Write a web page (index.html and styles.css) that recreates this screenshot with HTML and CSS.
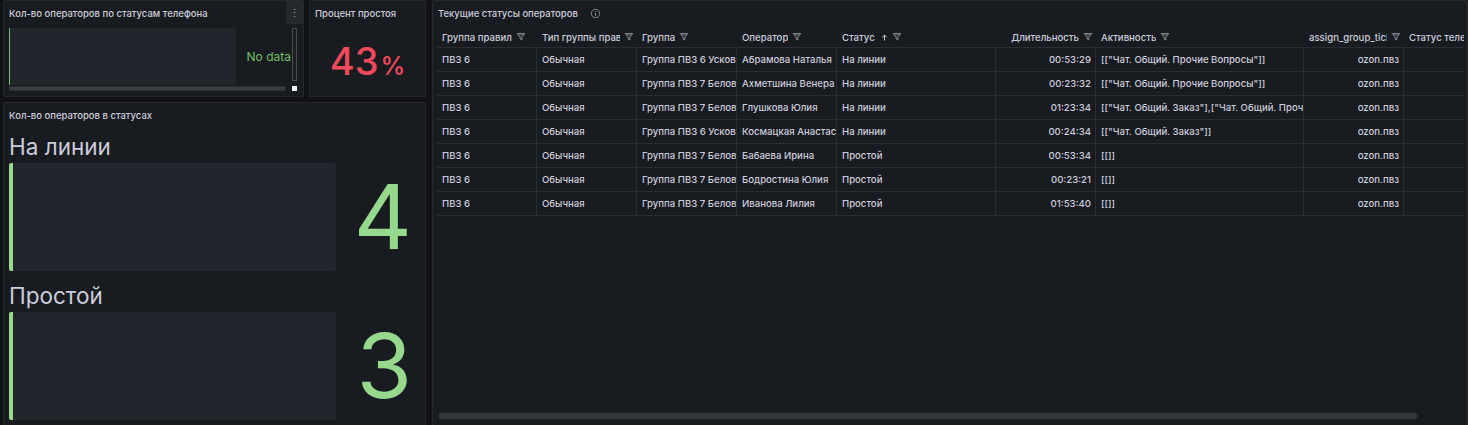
FILE: index.html
```html
<!DOCTYPE html>
<html lang="ru">
<head>
    <meta charset="UTF-8">
    <title>Статусы операторов</title>
    <link rel="stylesheet" href="styles.css">
</head>
<body>
    <svg class="defs" width="0" height="0">
        <symbol id="i-filter" viewBox="0 0 16 16">
            <path d="M2 2.5h12l-4.6 5.4v4.8l-2.8-1.5V7.9z" fill="none" stroke="currentColor" stroke-width="1.4" stroke-linejoin="round"/>
            <path d="M3.3 4.6h9.4" stroke="currentColor" stroke-width="1"/>
        </symbol>
    </svg>

    <div class="dashboard">
        <div class="left-col">
            <div class="top-row">
                <div class="panel phone-panel">
                    <div class="panel-header">Кол-во операторов по статусам телефона</div>
                    <div class="panel-menu">⋮</div>
                    <div class="phone-body">
                        <div class="gauge-row">
                            <div class="gauge-empty"></div>
                            <div class="no-data">No data</div>
                        </div>
                        <div class="v-scroll"></div>
                        <div class="h-scroll"></div>
                        <div class="corner"></div>
                    </div>
                </div>
                <div class="panel idle-panel">
                    <div class="panel-header">Процент простоя</div>
                    <div class="idle-body">
                        <span class="idle-value">43<span class="idle-unit">%</span></span>
                    </div>
                </div>
            </div>

            <div class="panel status-panel">
                <div class="panel-header">Кол-во операторов в статусах</div>
                <div class="status-body">
                    <div class="gauge">
                        <div class="gauge-label">На линии</div>
                        <div class="gauge-fill"></div>
                        <div class="gauge-value">4</div>
                    </div>
                    <div class="gauge">
                        <div class="gauge-label">Простой</div>
                        <div class="gauge-fill"></div>
                        <div class="gauge-value">3</div>
                    </div>
                </div>
            </div>
        </div>

        <div class="panel table-panel">
            <div class="panel-header">
                Текущие статусы операторов
                <svg class="info-icon" viewBox="0 0 12 12">
                    <circle cx="6" cy="6" r="4.6" fill="none" stroke="currentColor" stroke-width="1"/>
                    <path d="M6 5.4v3.2" stroke="currentColor" stroke-width="1.1"/>
                    <circle cx="6" cy="3.8" r="0.65" fill="currentColor"/>
                </svg>
            </div>
            <div class="table-wrap">
                <div class="table-scroll">
                    <div class="t-row t-head">
                        <div class="th"><span class="th-label">Группа правил</span><svg class="filter"><use href="#i-filter"/></svg></div>
                        <div class="th"><span class="th-label">Тип группы правил</span><svg class="filter"><use href="#i-filter"/></svg></div>
                        <div class="th"><span class="th-label">Группа</span><svg class="filter"><use href="#i-filter"/></svg></div>
                        <div class="th"><span class="th-label">Оператор</span><svg class="filter"><use href="#i-filter"/></svg></div>
                        <div class="th"><span class="th-label">Статус</span>
                            <svg class="sort" viewBox="0 0 8 8"><path d="M4 7.5V1.2M1.4 3.8L4 1.2l2.6 2.6" fill="none" stroke="currentColor" stroke-width="1.1"/></svg>
                            <svg class="filter"><use href="#i-filter"/></svg></div>
                        <div class="th th-num"><span class="th-label">Длительность</span><svg class="filter"><use href="#i-filter"/></svg></div>
                        <div class="th"><span class="th-label">Активность</span><svg class="filter"><use href="#i-filter"/></svg></div>
                        <div class="th th-num"><span class="th-label">assign_group_ticket</span><svg class="filter"><use href="#i-filter"/></svg></div>
                        <div class="th"><span class="th-label">Статус телефона</span><svg class="filter"><use href="#i-filter"/></svg></div>
                    </div>

                    <div class="t-row">
                        <div class="cell">ПВЗ 6</div><div class="cell">Обычная</div><div class="cell">Группа ПВЗ 6 Ускова Н.</div>
                        <div class="cell">Абрамова Наталья</div><div class="cell">На линии</div><div class="cell num">00:53:29</div>
                        <div class="cell">[["Чат. Общий. Прочие Вопросы"]]</div><div class="cell num">ozon.пвз</div><div class="cell"></div>
                    </div>
                    <div class="t-row">
                        <div class="cell">ПВЗ 6</div><div class="cell">Обычная</div><div class="cell">Группа ПВЗ 7 Беловой</div>
                        <div class="cell">Ахметшина Венера</div><div class="cell">На линии</div><div class="cell num">00:23:32</div>
                        <div class="cell">[["Чат. Общий. Прочие Вопросы"]]</div><div class="cell num">ozon.пвз</div><div class="cell"></div>
                    </div>
                    <div class="t-row">
                        <div class="cell">ПВЗ 6</div><div class="cell">Обычная</div><div class="cell">Группа ПВЗ 7 Беловой</div>
                        <div class="cell">Глушкова Юлия</div><div class="cell">На линии</div><div class="cell num">01:23:34</div>
                        <div class="cell">[["Чат. Общий. Заказ"],["Чат. Общий. Прочие Вопросы"]]</div><div class="cell num">ozon.пвз</div><div class="cell"></div>
                    </div>
                    <div class="t-row">
                        <div class="cell">ПВЗ 6</div><div class="cell">Обычная</div><div class="cell">Группа ПВЗ 6 Ускова Н.</div>
                        <div class="cell">Космацкая Анастасия</div><div class="cell">На линии</div><div class="cell num">00:24:34</div>
                        <div class="cell">[["Чат. Общий. Заказ"]]</div><div class="cell num">ozon.пвз</div><div class="cell"></div>
                    </div>
                    <div class="t-row">
                        <div class="cell">ПВЗ 6</div><div class="cell">Обычная</div><div class="cell">Группа ПВЗ 7 Беловой</div>
                        <div class="cell">Бабаева Ирина</div><div class="cell">Простой</div><div class="cell num">00:53:34</div>
                        <div class="cell">[[]]</div><div class="cell num">ozon.пвз</div><div class="cell"></div>
                    </div>
                    <div class="t-row">
                        <div class="cell">ПВЗ 6</div><div class="cell">Обычная</div><div class="cell">Группа ПВЗ 7 Беловой</div>
                        <div class="cell">Бодростина Юлия</div><div class="cell">Простой</div><div class="cell num">00:23:21</div>
                        <div class="cell">[[]]</div><div class="cell num">ozon.пвз</div><div class="cell"></div>
                    </div>
                    <div class="t-row">
                        <div class="cell">ПВЗ 6</div><div class="cell">Обычная</div><div class="cell">Группа ПВЗ 7 Беловой</div>
                        <div class="cell">Иванова Лилия</div><div class="cell">Простой</div><div class="cell num">01:53:40</div>
                        <div class="cell">[[]]</div><div class="cell num">ozon.пвз</div><div class="cell"></div>
                    </div>
                </div>
                <div class="hscroll-thumb"></div>
            </div>
        </div>
    </div>
</body>
</html>
```

FILE: styles.css
```css
body {
    margin: 0;
    width: 1468px;
    height: 425px;
    overflow: hidden;
    background-color: #111217;
    font-family: Inter, "Noto Sans", sans-serif;
    color: #ccccdc;
}
.defs {
    display: block;
}
.dashboard {
    display: grid;
    grid-template-columns: 423px 1036px;
    column-gap: 6px;
    padding-left: 3px;
}
.left-col {
    display: flex;
    flex-direction: column;
    gap: 5px;
}
.top-row {
    display: flex;
    gap: 5px;
    height: 97px;
}
.panel {
    background: #181b1f;
    border: 1px solid #26282d;
    border-radius: 2px;
    box-sizing: border-box;
    display: flex;
    flex-direction: column;
}
.panel-header {
    height: 24px;
    flex-shrink: 0;
    padding: 0 5px;
    display: flex;
    align-items: center;
    font-size: 9.5px;
    font-weight: 500;
    white-space: nowrap;
}

/* phone status panel */
.phone-panel {
    width: 301px;
    position: relative;
}
.panel-menu {
    position: absolute;
    top: 0;
    right: 0;
    width: 17px;
    height: 23px;
    background: #25282d;
    color: #9fa0a8;
    font-size: 11px;
    display: flex;
    align-items: center;
    justify-content: center;
}
.phone-body {
    display: grid;
    grid-template-columns: 282px 6px;
    grid-template-rows: 57px 5px;
    gap: 1px;
    padding: 3px 0 0 5px;
}
.gauge-row {
    display: flex;
}
.gauge-empty {
    width: 229px;
    background: #22252b;
    border-left: 1px solid #73bf69;
    box-sizing: border-box;
}
.no-data {
    flex: 1;
    display: flex;
    align-items: center;
    padding-left: 11px;
    color: #73bf69;
    font-size: 12px;
    white-space: nowrap;
}
.v-scroll {
    width: 5px;
    height: 53px;
    border: 1px solid #4a4c52;
    background: #1d1f23;
    box-sizing: border-box;
}
.h-scroll {
    width: 277px;
    height: 5px;
    border: 1px solid #2a2c30;
    background: #3b3d42;
    box-sizing: border-box;
}
.corner {
    width: 5px;
    height: 5px;
    background: #f2f2f2;
}

/* idle percent */
.idle-panel {
    width: 117px;
}
.idle-body {
    flex: 1;
    display: flex;
    align-items: center;
    justify-content: center;
    color: #f2495c;
    font-weight: 500;
}
.idle-value {
    font-size: 38px;
}
.idle-unit {
    font-size: 25px;
    margin-left: 2px;
}

/* operators in statuses */
.status-panel {
    height: 328px;
}
.status-body {
    padding: 5px 5px 0 5px;
    display: flex;
    flex-direction: column;
    gap: 10px;
}
.gauge {
    display: grid;
    grid-template-columns: 327px 1fr;
    grid-template-rows: 31px 108px;
}
.gauge-label {
    grid-column: 1 / -1;
    font-size: 22.5px;
    line-height: 29px;
}
.gauge-fill {
    background: #22252b;
    border-left: 4px solid #96d98d;
    border-radius: 2px;
}
.gauge-value {
    display: flex;
    align-items: center;
    justify-content: flex-end;
    padding-right: 8px;
    font-size: 90px;
    line-height: 1;
    color: #96d98d;
}

/* table */
.table-panel {
    height: 430px;
}
.info-icon {
    width: 11px;
    height: 11px;
    margin-left: 12px;
    color: #8e8e98;
}
.table-wrap {
    flex: 1;
    margin: 2px 3px 0 4px;
    display: flex;
    flex-direction: column;
    overflow: hidden;
}
.table-scroll {
    flex: 1;
    overflow: hidden;
}
.t-row {
    display: grid;
    grid-template-columns: 100px 100px 100px 100px 159px 100px 208px 100px 160px;
    height: 24px;
    border-bottom: 1px solid #2a2d32;
    box-sizing: border-box;
    width: 1127px;
}
.t-head {
    height: 21px;
}
.th {
    display: flex;
    align-items: center;
    padding: 0 3px 0 5px;
    font-size: 9.6px;
    font-weight: 500;
    overflow: hidden;
}
.th-num {
    justify-content: flex-end;
}
.th-label {
    overflow: hidden;
    white-space: nowrap;
    min-width: 0;
}
.filter {
    flex-shrink: 0;
    width: 10px;
    height: 10px;
    margin-left: 4px;
    color: #9a9ba5;
}
.sort {
    flex-shrink: 0;
    width: 7px;
    height: 7px;
    margin-left: 6px;
    color: #ccccdc;
}
.cell {
    display: flex;
    align-items: center;
    padding-left: 5px;
    font-size: 9.6px;
    font-weight: 500;
    white-space: nowrap;
    overflow: hidden;
    border-right: 1px solid #2a2d32;
    box-sizing: border-box;
}
.num {
    justify-content: flex-end;
    padding-right: 4px;
}
.hscroll-thumb {
    flex-shrink: 0;
    width: 978px;
    height: 6px;
    margin: 0 0 10px 2px;
    background: #34373c;
    border-radius: 3px;
}
```
